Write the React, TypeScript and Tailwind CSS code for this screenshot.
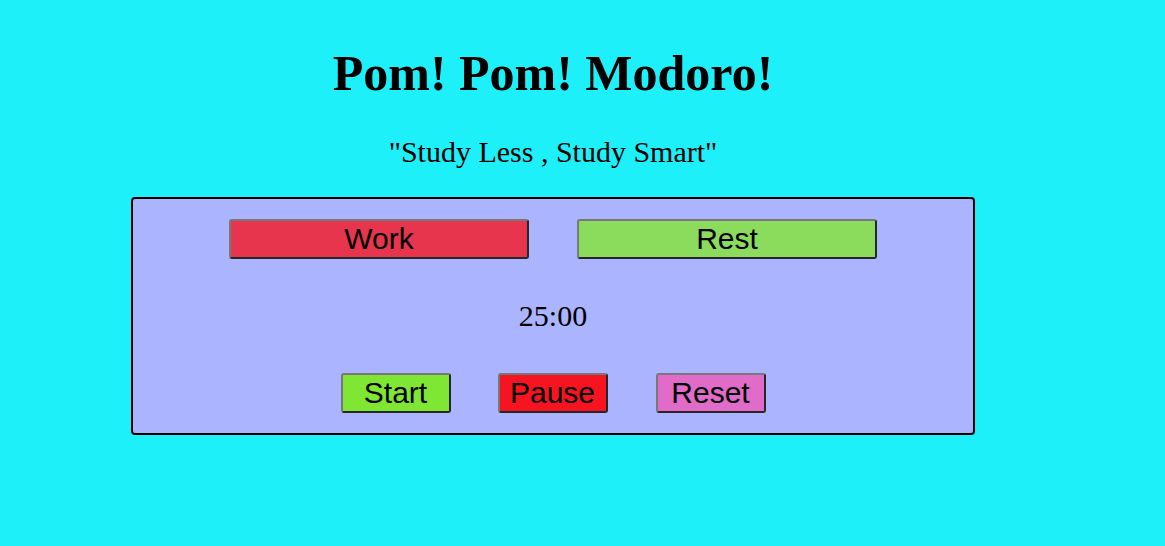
import React, { useState } from 'react';

const btnBase =
  "h-[40px] border-2 border-t-[#787878] border-l-[#787878] border-r-[#262626] border-b-[#262626] rounded-[3px] text-[30px] leading-none text-black font-['Liberation_Sans',Arial,sans-serif] flex items-center justify-center";

const App: React.FC = () => {
  const [mode, setMode] = useState<'work' | 'rest'>('work');
  const time = mode === 'work' ? '25:00' : '05:00';

  return (
    <div className="min-h-[546px] w-full bg-[#1ef0fa]">
      <div className="w-[1106px] pt-[48px] flex flex-col items-center font-['Liberation_Serif','Times_New_Roman',serif] text-black">
        <h1 className="text-[50px] leading-none font-bold">Pom! Pom! Modoro!</h1>
        <p className="mt-[39px] text-[30px] leading-none">"Study Less , Study Smart"</p>

        {/* Timer panel */}
        <div className="mt-[30px] w-[844px] h-[238px] bg-[#aab4ff] border-2 border-black rounded-[4px] flex flex-col items-center pt-[20px]">
          <div className="flex gap-[48px]">
            <button onClick={() => setMode('work')} className={`${btnBase} w-[300px] bg-[#e6354d]`}>
              Work
            </button>
            <button onClick={() => setMode('rest')} className={`${btnBase} w-[300px] bg-[#8bdc5c]`}>
              Rest
            </button>
          </div>

          <div className="mt-[42px] text-[30px] leading-none">{time}</div>

          <div className="mt-[42px] flex">
            <button className={`${btnBase} w-[110px] bg-[#7fe634]`}>Start</button>
            <button className={`${btnBase} ml-[47px] w-[110px] bg-[#f5141f]`}>Pause</button>
            <button className={`${btnBase} ml-[48px] w-[110px] bg-[#e06bc8]`}>Reset</button>
          </div>
        </div>
      </div>
    </div>
  );
};

export default App;
